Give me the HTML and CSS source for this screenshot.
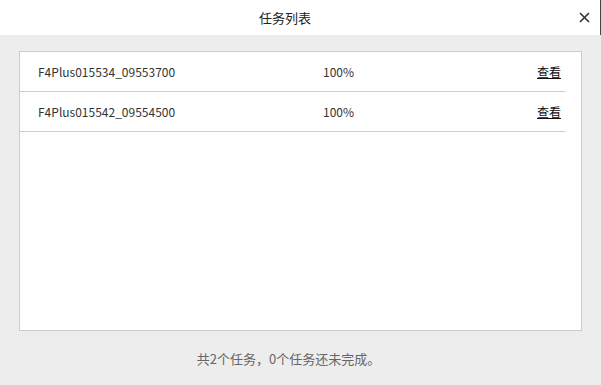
FILE: index.html
```html
<!DOCTYPE html>
<html lang="zh-CN">

<head>
    <meta charset="UTF-8">
    <meta name="viewport" content="width=device-width, initial-scale=1.0">
    <title>任务列表</title>
    <link rel="stylesheet" href="styles.css">
</head>

<body>
    <div class="dialog">
        <div class="dialog-header">
            <span class="dialog-title">任务列表</span>
            <button class="close-btn" aria-label="关闭">
                <svg width="11" height="11" viewBox="0 0 11 11">
                    <path d="M1 1 L10 10 M10 1 L1 10" stroke="#333" stroke-width="1.6" fill="none" />
                </svg>
            </button>
        </div>

        <div class="dialog-body">
            <div class="task-panel">
                <div class="task-row">
                    <span class="task-name">F4Plus015534_09553700</span>
                    <span class="task-progress">100%</span>
                    <a class="task-link" href="#">查看</a>
                </div>
                <div class="task-row">
                    <span class="task-name">F4Plus015542_09554500</span>
                    <span class="task-progress">100%</span>
                    <a class="task-link" href="#">查看</a>
                </div>
            </div>
            <p class="task-summary">共2个任务，0个任务还未完成。</p>
        </div>
    </div>
</body>

</html>
```

FILE: styles.css
```css
* {
    margin: 0;
    padding: 0;
    box-sizing: border-box;
    font-family: "Noto Sans CJK SC", "Noto Sans", sans-serif;
}

body {
    width: 601px;
    height: 385px;
    overflow: hidden;
    background: #ededed;
}

.dialog {
    height: 100%;
    display: flex;
    flex-direction: column;
}

.dialog-header {
    position: relative;
    height: 35px;
    background: #fff;
    display: flex;
    justify-content: center;
    align-items: center;
    padding-right: 30px;
    border-right: 1px solid #444;
}

.dialog-title {
    font-size: 13px;
    color: #222;
}

.close-btn {
    position: absolute;
    right: 10px;
    top: 12px;
    width: 11px;
    height: 11px;
    border: none;
    background: none;
    display: flex;
}

.dialog-body {
    flex: 1;
    padding: 16px 19px 0 19px;
    display: flex;
    flex-direction: column;
}

.task-panel {
    height: 280px;
    background: #fff;
    border: 1px solid #cccccc;
    padding-right: 16px;
}

.task-row {
    height: 40px;
    display: flex;
    align-items: center;
    border-bottom: 1px solid #cccccc;
    padding: 0 4px 0 18px;
    font-size: 12px;
    color: #333;
}

.task-name {
    width: 285px;
}

.task-progress {
    flex: 1;
}

.task-link {
    color: #111;
    text-decoration: underline;
}

.task-summary {
    text-align: center;
    font-size: 13px;
    color: #666;
    margin-top: 18px;
    padding-right: 24px;
}
```
